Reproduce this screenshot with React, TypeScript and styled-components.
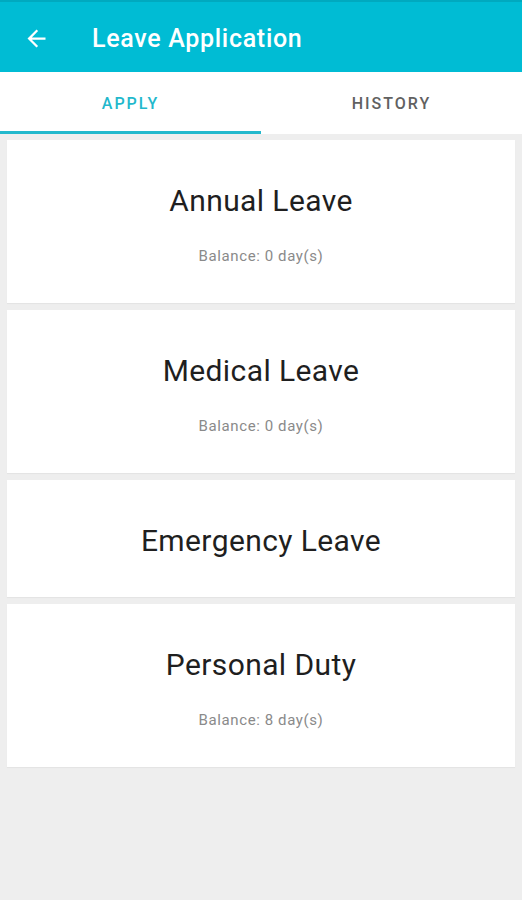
import React, { useState } from 'react';
import styled, { createGlobalStyle } from 'styled-components';

const GlobalStyle = createGlobalStyle`
  html, body {
    margin: 0;
    padding: 0;
    background: #eeeeee;
    font-family: Roboto, "Noto Sans", "Liberation Sans", sans-serif;
  }
`;

const Screen = styled.div`
  width: 522px;
  min-height: 900px;
  background: #eeeeee;
  display: flex;
  flex-direction: column;
`;

const AppBar = styled.header`
  height: 72px;
  background: #00bcd4;
  border-top: 2px solid #00a9bf;
  box-sizing: border-box;
  display: flex;
  align-items: center;
  padding: 2px 0 0 21px;
  gap: 41px;
`;

const BackButton = styled.button`
  background: none;
  border: none;
  padding: 0;
  width: 30px;
  height: 30px;
  display: flex;
  align-items: center;
  justify-content: center;
  color: #ffffff;
  cursor: pointer;
`;

const Title = styled.h1`
  margin: 0;
  color: #ffffff;
  font-size: 25px;
  font-weight: 500;
  letter-spacing: 0.7px;
`;

const TabBar = styled.nav`
  height: 62px;
  background: #ffffff;
  display: flex;
`;

const Tab = styled.button<{ $active: boolean }>`
  flex: 1;
  background: none;
  border: none;
  padding: 4px 0 0;
  font-family: inherit;
  font-size: 16px;
  font-weight: 500;
  letter-spacing: 2px;
  color: ${({ $active }) => ($active ? '#22b8cc' : '#616161')};
  border-bottom: 3px solid ${({ $active }) => ($active ? '#22b8cc' : 'transparent')};
  cursor: pointer;
`;

const List = styled.main`
  display: flex;
  flex-direction: column;
  gap: 7px;
  padding: 6px 7px;
`;

const Card = styled.div<{ $hasBalance: boolean }>`
  background: #ffffff;
  display: flex;
  flex-direction: column;
  align-items: center;
  padding: ${({ $hasBalance }) => ($hasBalance ? '43px 0 37px' : '43px 0 38px')};
  box-shadow: 0 1px 1px rgba(0, 0, 0, 0.04);
`;

const LeaveName = styled.div`
  font-size: 30px;
  line-height: 36px;
  color: #1f1f1f;
  letter-spacing: 0.4px;
`;

const Balance = styled.div`
  margin-top: 27px;
  font-size: 15px;
  line-height: 20px;
  color: #8a8a8a;
  letter-spacing: 0.6px;
`;

const leaves = [
  { name: 'Annual Leave', balance: 0 },
  { name: 'Medical Leave', balance: 0 },
  { name: 'Emergency Leave' },
  { name: 'Personal Duty', balance: 8 },
] as { name: string; balance?: number }[];

const ArrowLeft = () => (
  <svg width="27" height="27" viewBox="0 0 24 24" fill="currentColor">
    <path d="M20 11H7.83l5.59-5.59L12 4l-8 8 8 8 1.41-1.41L7.83 13H20v-2z" />
  </svg>
);

export default function App() {
  const [tab, setTab] = useState<'apply' | 'history'>('apply');

  return (
    <Screen>
      <GlobalStyle />
      <AppBar>
        <BackButton aria-label="Back">
          <ArrowLeft />
        </BackButton>
        <Title>Leave Application</Title>
      </AppBar>
      <TabBar>
        <Tab $active={tab === 'apply'} onClick={() => setTab('apply')}>APPLY</Tab>
        <Tab $active={tab === 'history'} onClick={() => setTab('history')}>HISTORY</Tab>
      </TabBar>
      <List>
        {leaves.map((l) => (
          <Card key={l.name} $hasBalance={l.balance !== undefined}>
            <LeaveName>{l.name}</LeaveName>
            {l.balance !== undefined && <Balance>Balance: {l.balance} day(s)</Balance>}
          </Card>
        ))}
      </List>
    </Screen>
  );
}
